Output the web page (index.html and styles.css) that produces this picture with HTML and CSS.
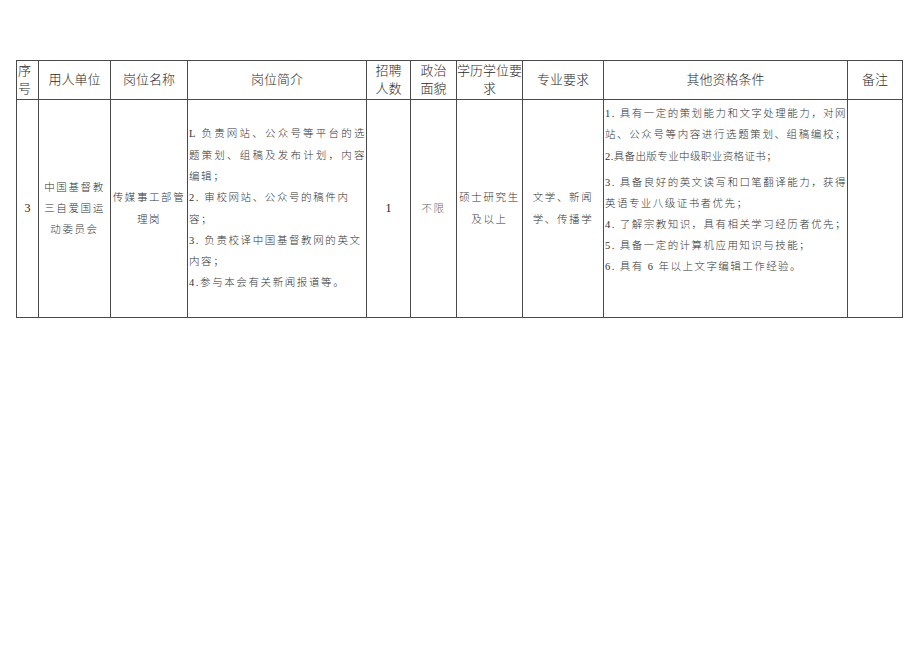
FILE: index.html
```html
<!DOCTYPE html>
<html lang="zh-CN">
<head>
<meta charset="utf-8">
<title>招聘岗位</title>
<link rel="stylesheet" href="styles.css">
</head>
<body>
<div class="page">
  <table class="jobs">
    <colgroup>
      <col class="c1"><col class="c2"><col class="c3"><col class="c4"><col class="c5">
      <col class="c6"><col class="c7"><col class="c8"><col class="c9"><col class="c10">
    </colgroup>
    <thead>
      <tr class="head">
        <th class="left"><span class="ln">序</span><span class="ln">号</span></th>
        <th>用人单位</th>
        <th>岗位名称</th>
        <th>岗位简介</th>
        <th><span class="ln">招聘</span><span class="ln">人数</span></th>
        <th><span class="ln">政治</span><span class="ln">面貌</span></th>
        <th><span class="ln">学历学位要</span><span class="ln">求</span></th>
        <th>专业要求</th>
        <th>其他资格条件</th>
        <th>备注</th>
      </tr>
    </thead>
    <tbody>
      <tr class="body">
        <td class="num">3</td>
        <td class="mid3"><span class="ln">中国基督教</span><span class="ln">三自爱国运</span><span class="ln">动委员会</span></td>
        <td class="mid2"><span class="ln">传媒事工部管</span><span class="ln">理岗</span></td>
        <td class="desc">
          <span class="ln j">L 负责网站、公众号等平台的选</span>
          <span class="ln j">题策划、组稿及发布计划，内容</span>
          <span class="ln">编辑；</span>
          <span class="ln">2. 审校网站、公众号的稿件内</span>
          <span class="ln">容；</span>
          <span class="ln">3. 负责校译中国基督教网的英文</span>
          <span class="ln">内容；</span>
          <span class="ln">4.参与本会有关新闻报道等。</span>
        </td>
        <td class="num">1</td>
        <td class="mid2 gray">不限</td>
        <td class="mid2"><span class="ln">硕士研究生</span><span class="ln">及以上</span></td>
        <td class="mid2"><span class="ln">文学、新闻</span><span class="ln">学、传播学</span></td>
        <td class="other">
          <span class="ln j">1. 具有一定的策划能力和文字处理能力，对网</span>
          <span class="ln j">站、公众号等内容进行选题策划、组稿编校；</span>
          <span class="ln tight p2">2.具备出版专业中级职业资格证书；</span>
          <span class="ln j p3">3. 具备良好的英文读写和口笔翻译能力，获得</span>
          <span class="ln">英语专业八级证书者优先；</span>
          <span class="ln j">4. 了解宗教知识，具有相关学习经历者优先；</span>
          <span class="ln">5. 具备一定的计算机应用知识与技能；</span>
          <span class="ln">6. 具有 6 年以上文字编辑工作经验。</span>
        </td>
        <td></td>
      </tr>
    </tbody>
  </table>
</div>
</body>
</html>
```

FILE: styles.css
```css
html, body {
  margin: 0;
  padding: 0;
  background: #ffffff;
}

.page {
  padding: 60px 0 0 16px;
  font-family: "Liberation Serif", "Noto Sans CJK SC", serif;
  color: #333333;
}

.jobs {
  border-collapse: collapse;
  table-layout: fixed;
  width: 887px;
}

.c1 { width: 22px; }
.c2 { width: 72px; }
.c3 { width: 77px; }
.c4 { width: 179px; }
.c5 { width: 44px; }
.c6 { width: 46px; }
.c7 { width: 66px; }
.c8 { width: 81px; }
.c9 { width: 244px; }
.c10 { width: 55px; }

.jobs th,
.jobs td {
  border: 1px solid #4a4a4a;
  padding: 0;
  vertical-align: middle;
  text-align: center;
  overflow: hidden;
}

.ln {
  display: block;
}

.head {
  height: 39px;
}

.head th {
  font-weight: 300;
  font-size: 13px;
  line-height: 18px;
  color: #2a2a2a;
  white-space: nowrap;
}

.head th.left {
  text-align: left;
  padding-left: 1px;
}

.body {
  height: 218px;
}

.body td {
  font-size: 10.5px;
  font-weight: 300;
  letter-spacing: 1.6px;
  color: #333333;
  white-space: nowrap;
}

.body td.num {
  font-size: 12px;
  letter-spacing: 0;
  color: #222222;
}

.mid3 {
  line-height: 21px;
}

.mid2 {
  line-height: 22px;
}

.gray {
  color: #666666 !important;
}

.desc {
  text-align: left !important;
  line-height: 21.3px;
  padding-left: 1px !important;
}

.other {
  text-align: left !important;
  vertical-align: top !important;
  line-height: 21px;
  padding: 3px 0 0 1px !important;
  letter-spacing: 1.45px !important;
}

.j {
  white-space: normal;
  text-align: justify;
  text-align-last: justify;
}

.tight {
  letter-spacing: 0.4px;
}

.p2 {
  margin-top: 1px;
}

.p3 {
  margin-top: 5px;
}
```
